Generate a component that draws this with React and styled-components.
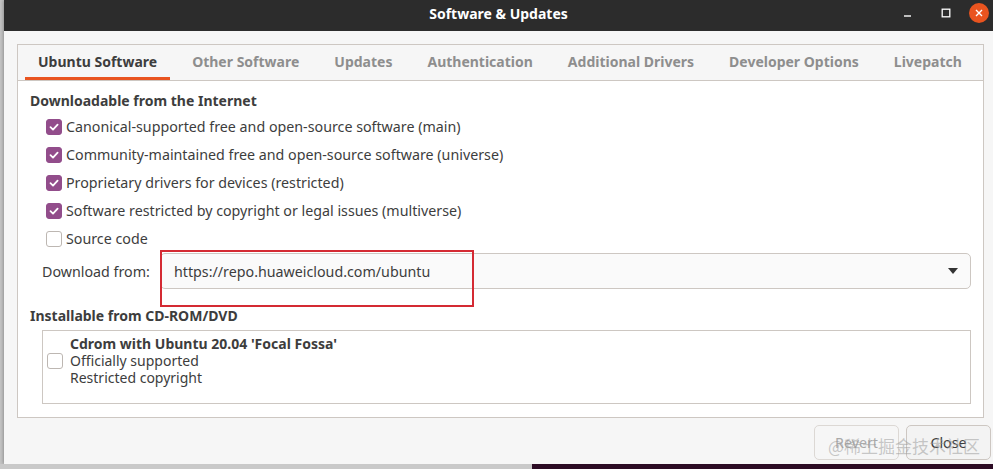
import styled, { createGlobalStyle } from "styled-components";

const GlobalStyle = createGlobalStyle`
  html, body {
    margin: 0;
    padding: 0;
    background: #c4c4c4;
    overflow: hidden;
  }
  * { box-sizing: border-box; }
`;

const FONT = `"Noto Sans", "Open Sans", sans-serif`;

const Screen = styled.div`
  position: relative;
  width: 993px;
  height: 469px;
  display: flex;
  flex-direction: column;
  overflow: hidden;
  font-family: ${FONT};
  color: #3d3d3d;
`;

const Window = styled.div`
  margin-left: 4px;
  width: 989px;
  height: 464px;
  background: #f6f6f6;
  display: flex;
  flex-direction: column;
  box-shadow: -1px 0 3px rgba(0, 0, 0, 0.25);
`;

const TitleBar = styled.div`
  height: 31px;
  flex: none;
  background: #2c2c2c;
  display: grid;
  grid-template-columns: 1fr auto 1fr;
  align-items: center;
  padding-bottom: 5px;
`;

const Title = styled.div`
  grid-column: 2;
  color: #ffffff;
  font-weight: 700;
  font-size: 14px;
`;

const Controls = styled.div`
  grid-column: 3;
  justify-self: end;
  display: flex;
  align-items: center;
  gap: 13px;
  margin-right: 4px;
`;

const ControlIcon = styled.div`
  width: 20px;
  height: 20px;
  display: flex;
  align-items: center;
  justify-content: ${(p) => (p.$start ? "flex-start" : "center")};
  border-radius: 50%;
  background: ${(p) => (p.$close ? "#e9541f" : "transparent")};
`;

const Body = styled.div`
  flex: 1;
  display: flex;
  flex-direction: column;
  padding: 13px 0 0 13px;
`;

const Notebook = styled.div`
  width: 967px;
  border: 1px solid #cdc7c2;
  display: flex;
  flex-direction: column;
`;

const TabBar = styled.div`
  height: 36px;
  display: flex;
  gap: 9px;
  padding-left: 7px;
  border-bottom: 1px solid #cdc7c2;
  background: #f6f6f6;
`;

const Tab = styled.div`
  padding: 1px 13px 0;
  display: flex;
  align-items: center;
  font-size: 14px;
  font-weight: 700;
  white-space: nowrap;
  color: ${(p) => (p.$active ? "#3d3d3d" : "#8e8e8e")};
  border-bottom: 3px solid ${(p) => (p.$active ? "#e95420" : "transparent")};
`;

const Page = styled.div`
  background: #ffffff;
  padding: 10px 12px 13px 12px;
  display: flex;
  flex-direction: column;
  font-size: 14.25px;
`;

const Heading = styled.div`
  font-weight: 700;
  font-size: 14px;
  line-height: 20px;
  margin-top: ${(p) => p.$top || 0}px;
`;

const CheckList = styled.div`
  display: flex;
  flex-direction: column;
  padding: 2px 0 0 16px;
`;

const CheckRow = styled.label`
  height: 28px;
  display: flex;
  align-items: center;
  gap: 4px;
  padding-bottom: 1px;
`;

const Box = styled.span`
  width: 16px;
  height: 16px;
  flex: none;
  border-radius: 3px;
  display: flex;
  align-items: center;
  justify-content: center;
  background: ${(p) => (p.$checked ? "#924d8b" : "#ffffff")};
  border: 1px solid ${(p) => (p.$checked ? "#924d8b" : "#bdb7b2")};
`;

const DownloadRow = styled.div`
  display: flex;
  align-items: center;
  padding-left: 12px;
  gap: 11px;
  height: 36px;
`;

const Label = styled.span`
  color: #3d3d3d;
  width: 107px;
  white-space: nowrap;
`;

const Combo = styled.div`
  flex: 1;
  height: 36px;
  border: 1px solid #cdc7c2;
  border-radius: 5px;
  background: #fafafa;
  display: flex;
  align-items: center;
  justify-content: space-between;
  padding: 0 12px 0 13px;
`;

const ListBox = styled.div`
  margin: 4px 0 0 12px;
  height: 74px;
  border: 1px solid #cdc7c2;
  background: #ffffff;
  display: flex;
  align-items: flex-start;
  gap: 7px;
  padding: 4px 0 0 4px;
`;

const ListCheck = styled.div`
  height: 52px;
  display: flex;
  align-items: center;
`;

const ListText = styled.div`
  display: flex;
  flex-direction: column;
  font-size: 14px;
  line-height: 17px;
`;

const Strong = styled.span`
  font-weight: 700;
`;

const ButtonRow = styled.div`
  display: flex;
  justify-content: flex-end;
  gap: 7px;
  padding: 7px 2px 0 0;
`;

const Button = styled.button`
  width: 85px;
  height: 35px;
  border-radius: 5px;
  border: 1px solid ${(p) => (p.disabled ? "#dcd8d4" : "#cdc7c2")};
  background: ${(p) => (p.disabled ? "#f6f6f6" : "#f3f3f3")};
  color: ${(p) => (p.disabled ? "#a9a9a9" : "#3d3d3d")};
  font-family: ${FONT};
  font-size: 14.25px;
  padding: 0;
`;

const Highlight = styled.div`
  position: absolute;
  left: 160px;
  top: 250px;
  width: 314px;
  height: 57px;
  border: 2px solid #d42a33;
  pointer-events: none;
`;

const Watermark = styled.div`
  position: absolute;
  left: 828px;
  top: 434px;
  font-family: "Noto Sans CJK SC", sans-serif;
  font-size: 17px;
  line-height: 24px;
  color: rgba(150, 150, 150, 0.5);
  white-space: nowrap;
  pointer-events: none;
`;

const Desktop = styled.div`
  flex: 1;
  display: flex;
`;

const Panel = styled.div`
  width: ${(p) => p.$w}px;
  background: ${(p) => p.$bg};
  flex: ${(p) => (p.$w ? "none" : 1)};
`;

const Check = () => (
  <svg width="12" height="12" viewBox="0 0 12 12">
    <path d="M2.5 6.2 L5 8.6 L9.6 3.6" fill="none" stroke="#fff" strokeWidth="1.8" strokeLinecap="round" strokeLinejoin="round" />
  </svg>
);

const tabs = [
  "Ubuntu Software",
  "Other Software",
  "Updates",
  "Authentication",
  "Additional Drivers",
  "Developer Options",
  "Livepatch",
];

const sources = [
  ["Canonical-supported free and open-source software (main)", true],
  ["Community-maintained free and open-source software (universe)", true],
  ["Proprietary drivers for devices (restricted)", true],
  ["Software restricted by copyright or legal issues (multiverse)", true],
  ["Source code", false],
];

export default function App() {
  return (
    <>
      <GlobalStyle />
      <Screen>
        <Window>
          <TitleBar>
            <Title>Software &amp; Updates</Title>
            <Controls>
              <ControlIcon $start>
                <svg width="10" height="10" viewBox="0 0 10 10">
                  <path d="M1 8 H8" stroke="#fff" strokeWidth="1.4" />
                </svg>
              </ControlIcon>
              <ControlIcon>
                <svg width="10" height="10" viewBox="0 0 10 10">
                  <rect x="1.2" y="1.2" width="7.6" height="7.6" fill="none" stroke="#fff" strokeWidth="1.3" />
                </svg>
              </ControlIcon>
              <ControlIcon $close>
                <svg width="10" height="10" viewBox="0 0 10 10">
                  <path d="M2 2 L8 8 M8 2 L2 8" stroke="#fff" strokeWidth="1.4" />
                </svg>
              </ControlIcon>
            </Controls>
          </TitleBar>
          <Body>
            <Notebook>
              <TabBar>
                {tabs.map((t, i) => (
                  <Tab key={t} $active={i === 0}>
                    {t}
                  </Tab>
                ))}
              </TabBar>
              <Page>
                <Heading>Downloadable from the Internet</Heading>
                <CheckList>
                  {sources.map(([text, on]) => (
                    <CheckRow key={text}>
                      <Box $checked={on}>{on && <Check />}</Box>
                      {text}
                    </CheckRow>
                  ))}
                </CheckList>
                <DownloadRow>
                  <Label>Download from:</Label>
                  <Combo>
                    <span>https://repo.huaweicloud.com/ubuntu</span>
                    <svg width="10" height="6" viewBox="0 0 10 6">
                      <path d="M0 0 H10 L5 6 Z" fill="#333" />
                    </svg>
                  </Combo>
                </DownloadRow>
                <Heading $top={17}>Installable from CD-ROM/DVD</Heading>
                <ListBox>
                  <ListCheck>
                    <Box />
                  </ListCheck>
                  <ListText>
                    <Strong>Cdrom with Ubuntu 20.04 'Focal Fossa'</Strong>
                    <span>Officially supported</span>
                    <span>Restricted copyright</span>
                  </ListText>
                </ListBox>
              </Page>
            </Notebook>
            <ButtonRow>
              <Button disabled>Revert</Button>
              <Button>Close</Button>
            </ButtonRow>
          </Body>
        </Window>
        <Desktop>
          <Panel $w={532} $bg="#c9c9c9" />
          <Panel $bg="#2c0b24" />
        </Desktop>
        <Highlight />
        <Watermark>@稀土掘金技术社区</Watermark>
      </Screen>
    </>
  );
}
